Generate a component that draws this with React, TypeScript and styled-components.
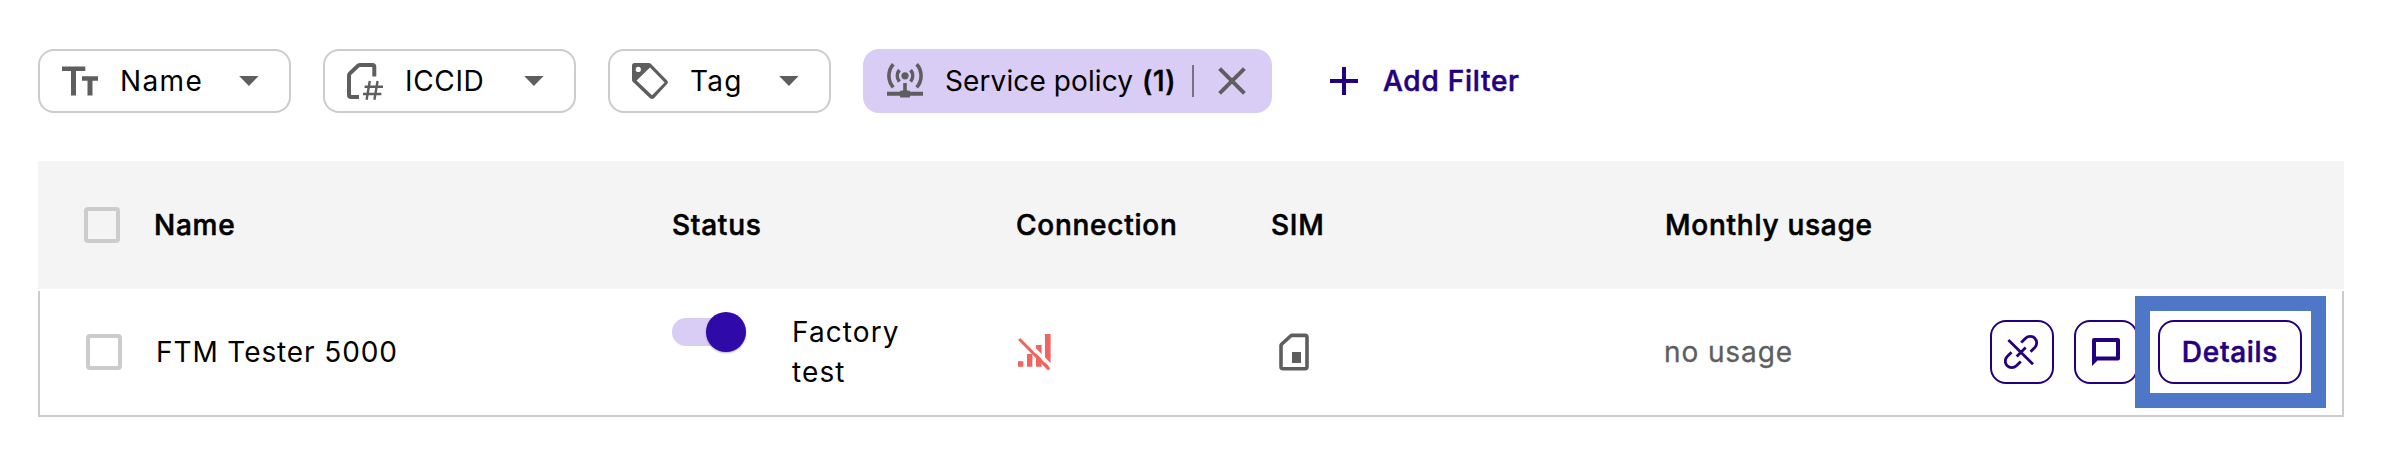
import React from "react";
import styled, { createGlobalStyle, css } from "styled-components";

const GlobalStyle = createGlobalStyle`
  * { box-sizing: border-box; }
  body { margin: 0; background: #fff; }
`;

const grey = "#5e5e5e";
const indigo = "#24007f";

const strong = css`
  font-weight: 500;
  -webkit-text-stroke: 0.55px currentColor;
`;

const Page = styled.main`
  width: 2386px;
  height: 458px;
  padding: 49px 42px 0 38px;
  font-family: Inter, "Liberation Sans", sans-serif;
  font-size: 28px;
  line-height: 40px;
  color: #000;
`;

const FilterBar = styled.div`
  display: flex;
  align-items: center;
  gap: 32px;
  height: 64px;
`;

const Chip = styled.button<{ $active?: boolean; $width: number }>`
  display: flex;
  align-items: center;
  width: ${(p) => p.$width}px;
  height: 64px;
  padding: 0 ${(p) => (p.$active ? 24 : 30)}px 0 22px;
  border: 2px solid ${(p) => (p.$active ? "#d9cdf5" : "#ccc")};
  border-radius: 16px;
  background: ${(p) => (p.$active ? "#d9cdf5" : "#fff")};
  font: inherit;
  color: inherit;
  white-space: nowrap;
`;

const ChipLabel = styled.span<{ $track: number }>`
  margin-left: 22px;
  flex: 1;
  text-align: left;
  letter-spacing: ${(p) => p.$track}px;
`;

const Count = styled.span`
  ${strong}
  margin-left: 1px;
  letter-spacing: 0.6px;
`;

const Divider = styled.span`
  width: 2px;
  height: 32px;
  margin-right: 24px;
  background: #77717f;
`;

const AddFilter = styled.button`
  display: flex;
  align-items: center;
  gap: 25px;
  margin-left: 26px;
  padding: 0;
  border: 0;
  background: none;
  font: inherit;
  ${strong}
  letter-spacing: 0.74px;
  color: ${indigo};
`;

const Table = styled.section`
  margin-top: 48px;
`;

const HeadRow = styled.div`
  display: grid;
  grid-template-columns: 70px 518px 344px 255px 394px 1fr;
  align-items: center;
  height: 128px;
  padding-left: 46px;
  background: #f4f4f4;
  ${strong}
  letter-spacing: 0.74px;
`;

const BodyRow = styled.div`
  display: grid;
  grid-template-columns: 70px 516px 345px 255px 392px 1fr;
  align-items: center;
  height: 126px;
  margin-top: 2px;
  padding: 0 0 2px 46px;
  border: solid #ccc;
  border-width: 0 2px 2px;
  letter-spacing: 0.9px;
`;

const Checkbox = styled.span`
  width: 36px;
  height: 36px;
  border: 4px solid #ccc;
  border-radius: 4px;
`;

const StatusCell = styled.div`
  display: flex;
  gap: 46px;
  letter-spacing: 1.1px;
`;

const Track = styled.span`
  display: flex;
  align-items: center;
  justify-content: flex-end;
  width: 74px;
  height: 28px;
  margin-top: 6px;
  border-radius: 14px;
  background: #d9cdf5;
`;

const Thumb = styled.span`
  width: 40px;
  height: 40px;
  border-radius: 50%;
  background: #3009a9;
  box-shadow: 0 1px 2px rgba(0, 0, 0, 0.3);
`;

const StatusText = styled.span`
  width: 130px;
`;

const UsageCell = styled.div`
  display: flex;
  align-items: center;
  justify-content: space-between;
  padding-right: 40px;
  color: ${grey};
`;

const UsageText = styled.span`
  -webkit-text-stroke: 0.3px currentColor;
`;

const IconCell = styled.span<{ $inset?: number }>`
  display: flex;
  padding-left: ${(p) => p.$inset ?? 0}px;
`;

const Actions = styled.div`
  display: flex;
  gap: 20px;
`;

const ActionButton = styled.button<{ $width?: number }>`
  display: flex;
  align-items: center;
  justify-content: center;
  width: ${(p) => p.$width ?? 64}px;
  height: 64px;
  padding: 0;
  border: 2px solid ${indigo};
  border-radius: 16px;
  background: #fff;
  font: inherit;
  ${strong}
  letter-spacing: 0.7px;
  color: ${indigo};
`;

const Highlight = styled.div`
  position: relative;
  &::after {
    content: "";
    position: absolute;
    inset: -24px -24px -24px -23px;
    border: 15px solid #4f77c8;
    pointer-events: none;
  }
`;

const TextIcon = () => (
  <svg width="36" height="36" viewBox="0 0 36 36" fill={grey}>
    <path d="M0 3.4h23.3V8H14v24.5H9V8H0zM20 13.2h16v4.5h-5.5v14.8h-5V17.7H20z" />
  </svg>
);

const SimNumberIcon = () => (
  <svg width="36" height="37" viewBox="0 0 36 37" fill="none" stroke={grey}>
    <path d="M12 34H4q-2 0-2-2V12.3q0-1 .7-1.7L11.2 2.6Q12 2 13 2H25.3q2 0 2 2v9.5" strokeWidth="4" />
    <path d="M22.8 18 19.6 36.7M30.6 18 27.4 36.7M17.6 23.8H36M16 31H34.4" strokeWidth="2.4" />
  </svg>
);

const TagIcon = () => (
  <svg width="36" height="36" viewBox="0 0 36 36" fill={grey} fillRule="evenodd">
    <path d="M2.5 0H17q1 0 1.8.8L35.3 17.7q1.3 1.5 0 3L22 35.2q-2 1.5-4 0L.8 18.8Q0 18 0 17V2.5Q0 0 2.5 0zM18 4.6 4.6 17.6 20 32.3 32.6 19.5zM6.3 3.8a2.6 2.6 0 1 0 0 5.2 2.6 2.6 0 0 0 0-5.2z" />
  </svg>
);

const BroadcastIcon = () => (
  <svg width="36" height="36" viewBox="0 0 36 36" fill="none" stroke={grey} strokeWidth="3.6">
    <circle cx="18" cy="12.8" r="3.6" fill={grey} stroke="none" />
    <path d="M12.4 7a9.2 9.2 0 0 0 0 11.6M23.6 7a9.2 9.2 0 0 1 0 11.6M6.3 1.2a17.5 17.5 0 0 0 0 23.2M29.7 1.2a17.5 17.5 0 0 1 0 23.2" />
    <path d="M18 20v9" />
    <path d="M0 30.8h36" strokeWidth="4" />
    <rect x="12.8" y="27.4" width="10.4" height="7.2" rx="1.5" fill={grey} stroke="none" />
  </svg>
);

const Caret = () => (
  <svg width="20" height="10" viewBox="0 0 20 10" fill={grey}>
    <path d="M.2 0h19.4L9.9 10z" />
  </svg>
);

const CloseIcon = () => (
  <svg width="28" height="28" viewBox="0 0 28 28" fill="none" stroke={grey} strokeWidth="4">
    <path d="M1.6 1.6 26.4 26.4M26.4 1.6 1.6 26.4" />
  </svg>
);

const PlusIcon = () => (
  <svg width="28" height="28" viewBox="0 0 28 28" fill={indigo}>
    <path d="M12 0h4v12h12v4H16v12h-4V16H0v-4h12z" />
  </svg>
);

const NoSignalIcon = () => (
  <svg width="36" height="38" viewBox="0 0 36 38">
    <path
      fill="#ef645f"
      d="M1 28.2h5.4v5.6H1zM10 21h5.4v12.8H10zM19 12h5.6v21.8H19zM28 1h5.6v32.6H28z"
    />
    <path d="M4.6 3.2 36 35" stroke="#fff" strokeWidth="3.4" />
    <path d="M2.2 6 32.2 36.4" stroke="#ef645f" strokeWidth="3" />
  </svg>
);

const SimIcon = () => (
  <svg width="30" height="38" viewBox="0 0 30 38" fill="none" stroke={grey} strokeWidth="3.6">
    <path d="M13 2.4H26q2 0 2 2V33.8q0 2-2 2H4q-2 0-2-2V12.6q0-.8.6-1.4l9-8.2q.6-.6 1.4-.6z" />
    <path d="M13 19h9v11h-9z" fill={grey} stroke="none" />
  </svg>
);

const UnlinkIcon = () => (
  <svg width="36" height="36" viewBox="0 0 36 36" fill="none" stroke={indigo} strokeWidth="2.8">
    <path d="M17.2 8.6 21.6 4.2A6.5 6.5 0 0 1 30.8 13.4L26.5 17.7M16.8 27.4 12.4 31.8A6.5 6.5 0 0 1 3.2 22.6L7.5 18.3M12.7 22.4 21.7 13.6M4.4 6 29 30.3" />
  </svg>
);

const ChatIcon = () => (
  <svg width="28" height="28" viewBox="0 0 28 28" fill={indigo} fillRule="evenodd">
    <path d="M2 0H26q2 0 2 2V20.5q0 2-2 2H5.5L0 28V2Q0 0 2 0zM4 4V18.5H24V4z" />
  </svg>
);

export default function App() {
  return (
    <>
      <GlobalStyle />
      <Page>
        <FilterBar>
          <Chip $width={253}>
            <TextIcon />
            <ChipLabel $track={1.4}>Name</ChipLabel>
            <Caret />
          </Chip>
          <Chip $width={253}>
            <SimNumberIcon />
            <ChipLabel $track={0.66}>ICCID</ChipLabel>
            <Caret />
          </Chip>
          <Chip $width={223}>
            <TagIcon />
            <ChipLabel $track={1.3}>Tag</ChipLabel>
            <Caret />
          </Chip>
          <Chip $active $width={409}>
            <BroadcastIcon />
            <ChipLabel $track={0.1}>
              Service policy <Count>(1)</Count>
            </ChipLabel>
            <Divider />
            <CloseIcon />
          </Chip>
          <AddFilter>
            <PlusIcon />
            Add Filter
          </AddFilter>
        </FilterBar>
        <Table>
          <HeadRow>
            <Checkbox />
            <span>Name</span>
            <span>Status</span>
            <span>Connection</span>
            <span>SIM</span>
            <span>Monthly usage</span>
          </HeadRow>
          <BodyRow>
            <Checkbox />
            <span>FTM Tester 5000</span>
            <StatusCell>
              <Track>
                <Thumb />
              </Track>
              <StatusText>Factory test</StatusText>
            </StatusCell>
            <IconCell>
              <NoSignalIcon />
            </IconCell>
            <IconCell $inset={7}>
              <SimIcon />
            </IconCell>
            <UsageCell>
              <UsageText>no usage</UsageText>
              <Actions>
                <ActionButton>
                  <UnlinkIcon />
                </ActionButton>
                <ActionButton>
                  <ChatIcon />
                </ActionButton>
                <Highlight>
                  <ActionButton $width={144}>Details</ActionButton>
                </Highlight>
              </Actions>
            </UsageCell>
          </BodyRow>
        </Table>
      </Page>
    </>
  );
}
